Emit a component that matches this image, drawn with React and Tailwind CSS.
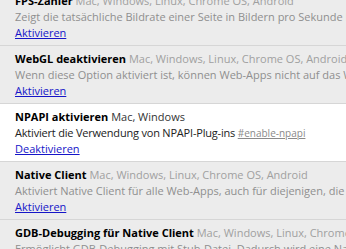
import React from 'react';

const ROWS = [
  {
    name: 'FPS-Zähler',
    platforms: 'Mac, Windows, Linux, Chrome OS, Android',
    desc: 'Zeigt die tatsächliche Bildrate einer Seite in Bildern pro Sekunde bei aktivierter Hardwarebeschleunigung an.',
    action: 'Aktivieren',
    enabled: false,
  },
  {
    name: 'WebGL deaktivieren',
    platforms: 'Mac, Windows, Linux, Chrome OS, Android',
    desc: 'Wenn diese Option aktiviert ist, können Web-Apps nicht auf das WebGL-API zugreifen.',
    action: 'Aktivieren',
    enabled: false,
  },
  {
    name: 'NPAPI aktivieren',
    platforms: 'Mac, Windows',
    desc: 'Aktiviert die Verwendung von NPAPI-Plug-ins',
    tag: '#enable-npapi',
    action: 'Deaktivieren',
    enabled: true,
  },
  {
    name: 'Native Client',
    platforms: 'Mac, Windows, Linux, Chrome OS, Android',
    desc: 'Aktiviert Native Client für alle Web-Apps, auch für diejenigen, die nicht über den Chrome Web Store installiert wurden.',
    action: 'Aktivieren',
    enabled: false,
  },
  {
    name: 'GDB-Debugging für Native Client',
    platforms: 'Mac, Windows, Linux, Chrome OS',
    desc: 'Ermöglicht GDB-Debugging mit Stub-Datei. Dadurch wird eine Native Client-Anwendung beim Start angehalten.',
    action: 'Aktivieren',
    enabled: false,
  },
];

const Experiment = ({ row }) => (
  <div
    className={`border-t border-[#d6d6d6] pl-[15px] pt-[5px] pb-[4px] ${
      row.enabled ? 'bg-white' : 'bg-[#ececec]'
    }`}
  >
    <div className="whitespace-nowrap leading-4">
      <span className="font-bold text-black">{row.name}</span>{' '}
      <span className={row.enabled ? 'text-[#333]' : 'text-[#a0a0a0]'}>{row.platforms}</span>
    </div>
    <div className={`whitespace-nowrap leading-4 ${row.enabled ? 'text-[#222] tracking-[-0.2px]' : 'text-[#8f8f8f]'}`}>
      {row.desc}
      {row.tag && (
        <>
          {' '}
          <span className="text-[10px] tracking-normal text-[#8a8a8a] underline">{row.tag}</span>
        </>
      )}
    </div>
    <div className="leading-4">
      <a href="#" className="text-[#1515c8] underline">{row.action}</a>
    </div>
  </div>
);

export default function App() {
  return (
    <div
      className="w-[346px] h-[249px] overflow-hidden bg-white text-[11px]"
      style={{ fontFamily: '"Open Sans", "Noto Sans", sans-serif' }}
    >
      <div className="-mt-[13px]">
        {ROWS.map((r) => (
          <Experiment key={r.name} row={r} />
        ))}
      </div>
    </div>
  );
}
